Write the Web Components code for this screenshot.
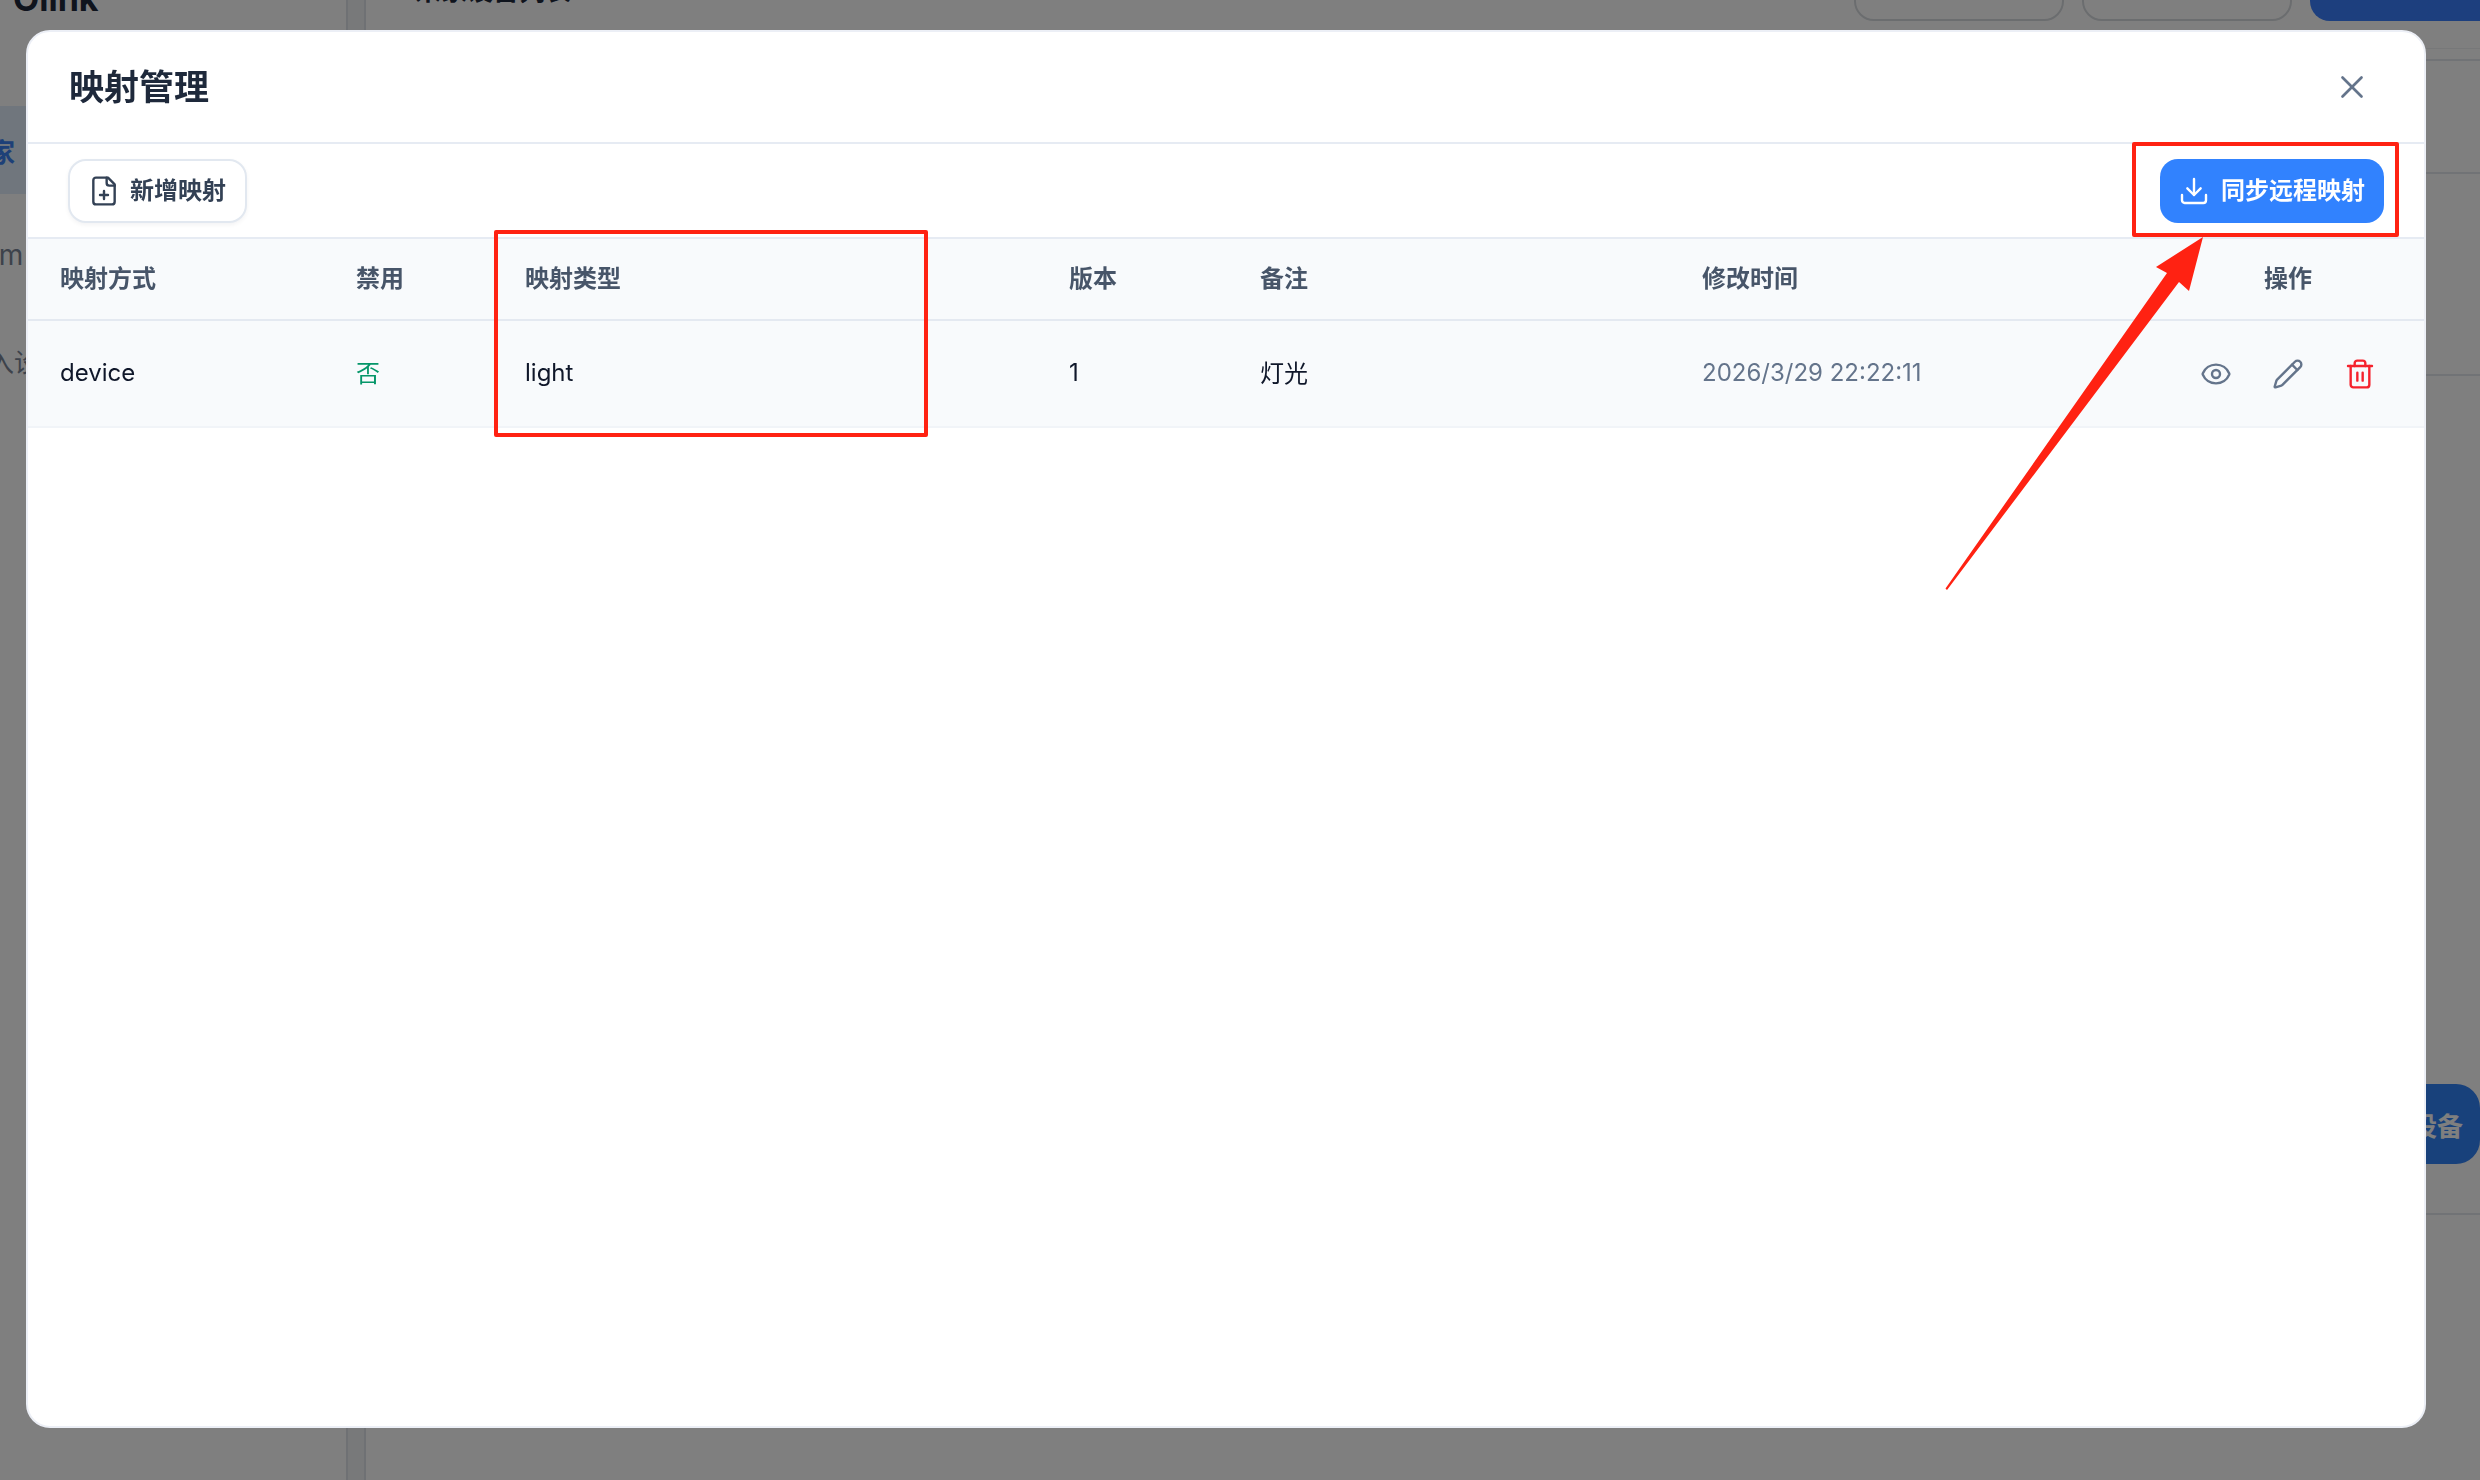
<!DOCTYPE html>
<html lang="zh-CN">
<head>
<meta charset="utf-8">
<title>映射管理</title>
<style>
    html, body {
        margin: 0;
        width: 2480px;
        height: 1480px;
        overflow: hidden;
        background: #fff;
        font-family: Inter, "Noto Sans CJK SC", sans-serif;
    }
</style>
</head>
<body>
<page-behind></page-behind>
<modal-layer>
    <mapping-modal title-text="映射管理">
        <mapping-button slot="toolbar" icon="file-plus">新增映射</mapping-button>
        <mapping-button slot="toolbar" icon="download" primary>同步远程映射</mapping-button>
        <mapping-table></mapping-table>
    </mapping-modal>
    <mark-box style="left:494px;top:230px;width:434px;height:207px"></mark-box>
    <mark-box style="left:2132px;top:142px;width:267px;height:95px"></mark-box>
    <mark-arrow></mark-arrow>
</modal-layer>

<script>
const ICONS = {
    'file-plus': '<path d="M15 2H6a2 2 0 0 0-2 2v16a2 2 0 0 0 2 2h12a2 2 0 0 0 2-2V7Z"/><path d="M14 2v4a2 2 0 0 0 2 2h4"/><path d="M9 15h6"/><path d="M12 18v-6"/>',
    'download': '<path d="M12 15V3"/><path d="M21 15v4a2 2 0 0 1-2 2H5a2 2 0 0 1-2-2v-4"/><path d="m7 10 5 5 5-5"/>',
    'eye': '<path d="M2.062 12.348a1 1 0 0 1 0-.696 10.75 10.75 0 0 1 19.876 0 1 1 0 0 1 0 .696 10.75 10.75 0 0 1-19.876 0"/><circle cx="12" cy="12" r="3"/>',
    'pencil': '<path d="M21.174 6.812a1 1 0 0 0-3.986-3.987L3.842 16.174a2 2 0 0 0-.5.83l-1.321 4.352a.5.5 0 0 0 .623.622l4.353-1.32a2 2 0 0 0 .83-.497z"/><path d="m15 5 4 4"/>',
    'trash': '<path d="M3 6h18"/><path d="M19 6v14a2 2 0 0 1-2 2H7a2 2 0 0 1-2-2V6"/><path d="M8 6V4a2 2 0 0 1 2-2h4a2 2 0 0 1 2 2v2"/><path d="M10 11v6"/><path d="M14 11v6"/>',
    'x': '<path d="M18 6 6 18"/><path d="m6 6 12 12"/>'
};

class UiIcon extends HTMLElement {
    constructor() {
        super();
        const shadow = this.attachShadow({ mode: 'open' });
        const size = this.getAttribute('size') || 32;
        const stroke = this.getAttribute('stroke') || 1.8;
        shadow.innerHTML = `
        <style>
            :host { display: inline-flex; flex: none; }
            svg { display: block; fill: none; stroke: currentColor; stroke-linecap: round; stroke-linejoin: round; }
        </style>
        <svg width="${size}" height="${size}" viewBox="0 0 24 24" stroke-width="${stroke}">${ICONS[this.getAttribute('name')]}</svg>
        `;
    }
}
customElements.define('ui-icon', UiIcon);

// The page under the dimmed layer, only its edges can be seen
class PageBehind extends HTMLElement {
    constructor() {
        super();
        const shadow = this.attachShadow({ mode: 'open' });
        shadow.innerHTML = `
        <style>
            :host { display: flex; width: 2480px; height: 1480px; overflow: hidden; background: #fff; }
            .side { width: 346px; flex: none; border-right: 2px solid #dfe3e8; }
            .logo { margin: -29px 0 0 13px; height: 56px; font-size: 34px; line-height: 56px; font-weight: 700; color: #1e293b; }
            nav { display: flex; flex-direction: column; gap: 17px; padding-top: 79px; }
            nav div { height: 88px; display: flex; align-items: center; white-space: nowrap; }
            nav .on { background: #e0ecfb; color: #3a80f0; font-size: 26px; font-weight: 600; }
            nav .on span { margin-left: -37px; }
            nav .mail { color: #7a8597; font-size: 28px; }
            nav .mail span { margin-left: -34px; }
            nav .link { color: #7a8597; font-size: 26px; }
            nav .link span { margin-left: -38px; }
            .strip { width: 16px; flex: none; background: #f0f2f5; }
            main { flex: 1; min-width: 0; border-left: 2px solid #dfe3e8; display: flex; flex-direction: column; }
            .head { height: 49px; flex: none; display: flex; align-items: flex-end; border-bottom: 1px solid #eef0f3; box-sizing: border-box; }
            .head h1 { margin: 0 0 42px 49px; font-size: 26px; line-height: 30px; font-weight: 700; color: #1e293b; white-space: nowrap; }
            .actions { margin: 0 0 27px auto; display: flex; gap: 18px; }
            .ghost, .blue { height: 64px; box-sizing: border-box; border-radius: 20px; }
            .ghost { width: 210px; border: 2px solid #d6dade; }
            .blue { width: 170px; background: #3a7efc; border-radius: 20px 0 0 20px; }
            .row { flex: none; box-sizing: border-box; border-bottom: 2px solid #e2e6ec; }
            .last { display: flex; justify-content: flex-end; align-items: flex-end; padding-bottom: 49px; }
            .add { width: 224px; height: 80px; display: flex; align-items: center; justify-content: flex-end; padding-right: 17px; box-sizing: border-box;
                   border-radius: 24px; background: #3182f6; color: #fff; font-size: 26px; font-weight: 600; }
        </style>
        <div class="side">
            <div class="logo">Olink</div>
            <nav>
                <div class="on"><span>米家</span></div>
                <div class="mail"><span>com</span></div>
                <div class="link"><span>接入设备</span></div>
            </nav>
        </div>
        <div class="strip"></div>
        <main>
            <div class="head">
                <h1>米家设备列表</h1>
                <div class="actions">
                    <div class="ghost"></div>
                    <div class="ghost"></div>
                    <div class="blue"></div>
                </div>
            </div>
            <div class="row" style="height:12px"></div>
            <div class="row" style="height:113px"></div>
            <div class="row" style="height:202px"></div>
            <div class="row last" style="height:839px"><div class="add">添加设备</div></div>
        </main>
        `;
    }
}
customElements.define('page-behind', PageBehind);

class ModalLayer extends HTMLElement {
    constructor() {
        super();
        const shadow = this.attachShadow({ mode: 'open' });
        shadow.innerHTML = `
        <style>
            :host {
                position: fixed;
                inset: 0;
                display: flex;
                box-sizing: border-box;
                padding: 30px 54px 52px 26px;
                background: rgba(0, 0, 0, .5);
            }
        </style>
        <slot></slot>
        `;
    }
}
customElements.define('modal-layer', ModalLayer);

class MappingModal extends HTMLElement {
    constructor() {
        super();
        const shadow = this.attachShadow({ mode: 'open' });
        shadow.innerHTML = `
        <style>
            :host {
                flex: 1;
                display: flex;
                flex-direction: column;
                box-sizing: border-box;
                background: #fff;
                border: 2px solid #eceff6;
                border-radius: 24px;
                overflow: hidden;
            }
            header {
                height: 110px;
                flex: none;
                display: flex;
                align-items: center;
                justify-content: space-between;
                padding: 0 53px 0 41px;
                border-bottom: 2px solid #e6ebf3;
            }
            /* Noto CJK sits lower in the line than the reference font */
            h2 { margin: 0 0 6px; font-size: 35px; font-weight: 700; color: #1e293b; }
            ui-icon { color: #64748b; }
            .toolbar {
                height: 95px;
                flex: none;
                box-sizing: border-box;
                display: flex;
                justify-content: space-between;
                padding: 15px 40px 0;
                border-bottom: 2px solid #e6ebf3;
            }
        </style>
        <header>
            <h2>${this.getAttribute('title-text')}</h2>
            <ui-icon name="x" size="38" stroke="1.7"></ui-icon>
        </header>
        <div class="toolbar"><slot name="toolbar"></slot></div>
        <slot></slot>
        `;
    }
}
customElements.define('mapping-modal', MappingModal);

class MappingButton extends HTMLElement {
    constructor() {
        super();
        const shadow = this.attachShadow({ mode: 'open' });
        shadow.innerHTML = `
        <style>
            :host {
                display: inline-flex;
                align-items: center;
                height: 64px;
                box-sizing: border-box;
                padding: 0 19px 0 18px;
                gap: 10px;
                border: 2px solid #e2e8f0;
                border-radius: 18px;
                background: #fff;
                box-shadow: 0 2px 4px rgba(15, 23, 42, .05);
                color: #334155;
                font-size: 24px;
                font-weight: 600;
                white-space: nowrap;
            }
            :host([primary]) {
                gap: 11px;
                border: 0;
                background: #3182fe;
                box-shadow: none;
                color: #fff;
            }
            span { padding-bottom: 6px; }
        </style>
        <ui-icon name="${this.getAttribute('icon')}"></ui-icon>
        <span><slot></slot></span>
        `;
    }
}
customElements.define('mapping-button', MappingButton);

class MappingTable extends HTMLElement {
    constructor() {
        super();
        const shadow = this.attachShadow({ mode: 'open' });
        const heads = ['映射方式', '禁用', '映射类型', '版本', '备注', '修改时间', '操作'];
        shadow.innerHTML = `
        <style>
            :host { display: block; font-size: 24px; }
            .row {
                display: grid;
                grid-template-columns: 295px 169px 544px 191px 442px 491px 1fr;
                align-items: center;
                box-sizing: border-box;
                background: #f8fafc;
            }
            .row > div { padding-left: 33px; padding-bottom: 2px; white-space: nowrap; }
            .row > div:first-child { padding-left: 32px; }
            .head { height: 82px; border-bottom: 2px solid #e4e9f1; color: #475569; font-weight: 600; }
            .head > div { padding-bottom: 6px; }
            .body { height: 107px; border-bottom: 2px solid #f1f4f8; color: #0f172a; }
            .row > .ops { padding: 0 8px 0 0; text-align: center; display: flex; justify-content: center; gap: 40px; }
            .head > .ops { padding-bottom: 6px; }
            .body > .cjk { padding-bottom: 5px; }
            .no { color: #059669; }
            .time { color: #64748b; }
            .gray { color: #64748b; }
            .red { color: #f5222d; }
        </style>
        <div class="row head">
            ${heads.map((h, i) => `<div class="${i === 6 ? 'ops' : ''}">${h}</div>`).join('')}
        </div>
        <div class="row body">
            <div>device</div>
            <div class="no cjk">否</div>
            <div>light</div>
            <div>1</div>
            <div class="cjk">灯光</div>
            <div class="time">2026/3/29 22:22:11</div>
            <div class="ops">
                <ui-icon class="gray" name="eye"></ui-icon>
                <ui-icon class="gray" name="pencil"></ui-icon>
                <ui-icon class="red" name="trash"></ui-icon>
            </div>
        </div>
        `;
    }
}
customElements.define('mapping-table', MappingTable);

// Red annotations drawn on top of the screenshot
class MarkBox extends HTMLElement {
    constructor() {
        super();
        const shadow = this.attachShadow({ mode: 'open' });
        shadow.innerHTML = `
        <style>
            :host { position: absolute; box-sizing: border-box; border: 4px solid #ff2212; border-radius: 2px; }
        </style>
        `;
    }
}
customElements.define('mark-box', MarkBox);

class MarkArrow extends HTMLElement {
    constructor() {
        super();
        const shadow = this.attachShadow({ mode: 'open' });
        shadow.innerHTML = `
        <style>
            :host { position: absolute; left: 1930px; top: 230px; width: 290px; height: 370px; }
            svg { display: block; }
        </style>
        <svg width="290" height="370" viewBox="1930 230 290 370">
            <polygon fill="#ff2212" points="1945.5,588.5 2167,273 2156,267 2203,237 2189,291 2179,282 1947,590"/>
        </svg>
        `;
    }
}
customElements.define('mark-arrow', MarkArrow);
</script>
</body>
</html>
